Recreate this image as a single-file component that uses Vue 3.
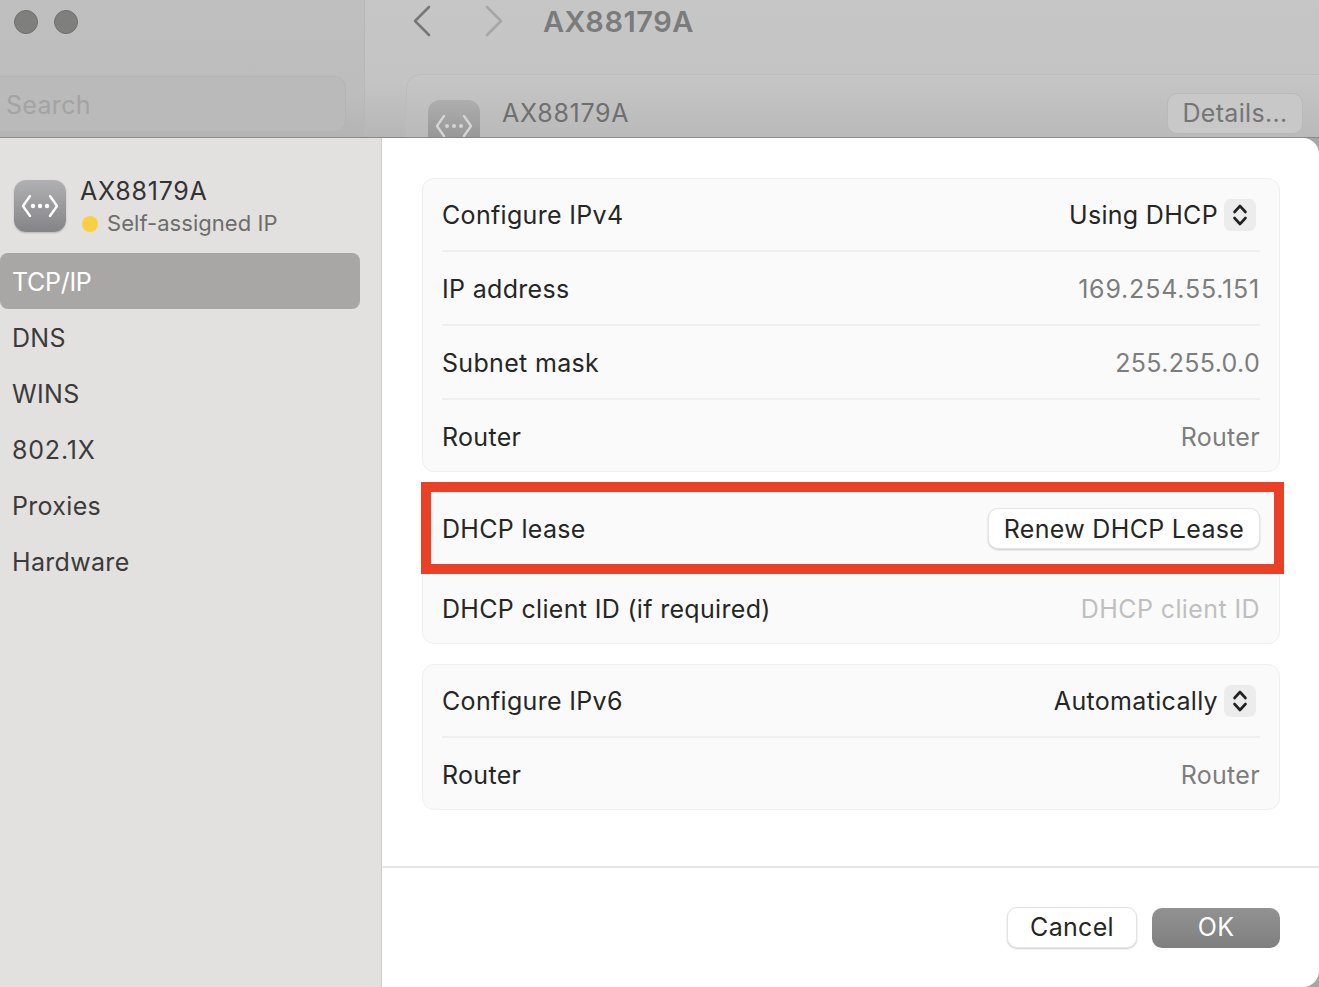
<script setup>
const tabs = ['TCP/IP', 'DNS', 'WINS', '802.1X', 'Proxies', 'Hardware']
</script>

<template>
  <div class="page">
    <header class="backdrop">
      <div class="back-side">
        <div class="lights"><span class="light"></span><span class="light"></span></div>
        <div class="search">Search</div>
      </div>
      <div class="back-main">
        <div class="nav">
          <svg class="chev" width="20" height="32" viewBox="0 0 20 32"><path d="M17 2 3 16l14 14" fill="none" stroke="#777" stroke-width="2.6" stroke-linecap="round" stroke-linejoin="round"/></svg>
          <svg class="chev second" width="20" height="32" viewBox="0 0 20 32"><path d="m3 2 14 14L3 30" fill="none" stroke="#a6a6a6" stroke-width="2.6" stroke-linecap="round" stroke-linejoin="round"/></svg>
          <span class="title">AX88179A</span>
        </div>
        <div class="back-card">
          <div class="icon dim">
            <svg width="38" height="22" viewBox="0 0 38 22"><path d="M9 1 2 11l7 10M29 1l7 10-7 10" fill="none" stroke="#d4d4d4" stroke-width="2.4" stroke-linecap="round" stroke-linejoin="round"/><circle cx="12" cy="11" r="2" fill="#d4d4d4"/><circle cx="19" cy="11" r="2" fill="#d4d4d4"/><circle cx="26" cy="11" r="2" fill="#d4d4d4"/></svg>
          </div>
          <span class="back-name">AX88179A</span>
          <span class="details">Details...</span>
        </div>
      </div>
    </header>

    <div class="sheet">
      <aside class="sidebar">
        <div class="device">
          <div class="icon">
            <svg width="38" height="22" viewBox="0 0 38 22"><path d="M9 1 2 11l7 10M29 1l7 10-7 10" fill="none" stroke="#fff" stroke-width="2.4" stroke-linecap="round" stroke-linejoin="round"/><circle cx="12" cy="11" r="2.2" fill="#fff"/><circle cx="19" cy="11" r="2.2" fill="#fff"/><circle cx="26" cy="11" r="2.2" fill="#fff"/></svg>
          </div>
          <div class="device-text">
            <div class="device-name">AX88179A</div>
            <div class="device-status"><span class="dot"></span>Self-assigned IP</div>
          </div>
        </div>
        <nav class="tabs">
          <div v-for="(t, i) in tabs" :key="t" class="tab" :class="{ active: i === 0 }">{{ t }}</div>
        </nav>
      </aside>

      <main class="content">
        <div class="forms">
          <section class="group first">
            <div class="row r1">
              <span>Configure IPv4</span>
              <span class="select">Using DHCP
                <span class="stepper"><svg width="16" height="26" viewBox="0 0 16 26"><path d="m2.500 10 5.500-6 5.500 6M2.500 16l5.500 6 5.500-6" fill="none" stroke="#222" stroke-width="2.600" stroke-linecap="round" stroke-linejoin="round"/></svg></span>
              </span>
            </div>
            <div class="row shifted"><span>IP address</span><span class="val ip">169.254.55.151</span></div>
            <div class="row shifted"><span>Subnet mask</span><span class="val">255.255.0.0</span></div>
            <div class="row last"><span>Router</span><span class="val">Router</span></div>
          </section>

          <section class="group second">
            <div class="row lease">
              <span>DHCP lease</span>
              <button class="btn renew">Renew DHCP Lease</button>
            </div>
            <div class="row client"><span>DHCP client ID (if required)</span><span class="val ph">DHCP client ID</span></div>
            <div class="mark"></div>
          </section>

          <section class="group third">
            <div class="row r1">
              <span>Configure IPv6</span>
              <span class="select auto">Automatically
                <span class="stepper"><svg width="16" height="26" viewBox="0 0 16 26"><path d="m2.500 10 5.500-6 5.500 6M2.500 16l5.500 6 5.500-6" fill="none" stroke="#222" stroke-width="2.600" stroke-linecap="round" stroke-linejoin="round"/></svg></span>
              </span>
            </div>
            <div class="row last"><span>Router</span><span class="val">Router</span></div>
          </section>
        </div>

        <footer class="foot">
          <button class="btn cancel"><span class="lift">Cancel</span></button>
          <button class="btn ok"><span class="lift">OK</span></button>
        </footer>
      </main>
    </div>
  </div>
</template>

<style>
html, body { margin: 0; background: #a9a9a9; }
</style>

<style scoped>
.page {
  width: 1319px;
  height: 987px;
  overflow: hidden;
  background: #a6a6a6;
  font-family: Inter, "Liberation Sans", sans-serif;
  font-size: 25px;
  letter-spacing: .32px;
  color: #262626;
  display: flex;
  flex-direction: column;
}
.backdrop {
  height: 137px;
  flex: none;
  display: flex;
  border-bottom: 1px solid #8a8a8a;
  background: linear-gradient(#c6c6c6, #c4c4c4 60%, #b6b6b6);
  overflow: hidden;
}
.back-side {
  width: 365px;
  flex: none;
  box-sizing: border-box;
  border-right: 1px solid #b7b7b7;
  background: linear-gradient(#bfbfbf, #bdbdbd 70%, #b4b4b4);
}
.lights {
  display: flex;
  gap: 16px;
  padding: 10px 0 0 14px;
}
.light {
  width: 24px;
  height: 24px;
  box-sizing: border-box;
  border-radius: 50%;
  background: #7f7f7d;
  border: 1px solid #6f6f6e;
}
.search {
  margin-top: 42px;
  width: 346px;
  height: 56px;
  box-sizing: border-box;
  padding: 13px 0 0 6px;
  border-radius: 0 12px 12px 0;
  background: #bababa;
  border: 1px solid #b4b4b4;
  border-left: 0;
  color: #a3a3a3;
  line-height: 30px;
}
.back-main {
  flex: 1;
  padding-left: 41px;
}
.nav {
  display: flex;
  align-items: center;
  height: 42px;
}
.chev { margin-left: 6px; }
.chev.second { margin-left: 52px; }
.title {
  margin-left: 39px;
  font-size: 29px;
  letter-spacing: .5px;
  font-weight: 600;
  color: #7b7b7b;
}
.back-card {
  margin-top: 32px;
  height: 90px;
  box-sizing: border-box;
  margin-right: -20px;
  border: 1px solid #bcbcbc;
  border-radius: 14px;
  background: linear-gradient(#c6c6c6, #bdbdbd 50%, #b5b5b5);
  padding: 25px 35px 0 21px;
  display: flex;
  align-items: flex-start;
}
.icon {
  width: 52px;
  height: 52px;
  flex: none;
  border-radius: 12px;
  background: linear-gradient(#b1b0b3, #848387);
  display: flex;
  align-items: center;
  justify-content: center;
  box-shadow: 0 1px 2px rgba(0, 0, 0, .2);
}
.icon.dim { background: linear-gradient(#aeaeae, #8f8f8f); box-shadow: none; }
.back-name {
  margin-left: 22px;
  margin-top: -1px;
  letter-spacing: .7px;
  color: #6f6f6f;
  line-height: 28px;
}
.details {
  flex: none;
  margin-left: auto;
  margin-top: -7px;
  width: 136px;
  height: 41px;
  box-sizing: border-box;
  text-align: center;
  line-height: 38px;
  border-radius: 10px;
  color: #757575;
  background: #c8c8c8;
  border: 1px solid #b9b9b9;
}
.sheet {
  flex: 1;
  min-height: 0;
  display: flex;
}
.sidebar {
  width: 382px;
  flex: none;
  box-sizing: border-box;
  background: #e2e1df;
  border-right: 1px solid #cfcecd;
  padding-top: 42px;
}
.device {
  display: flex;
  padding-left: 14px;
  gap: 14px;
  height: 73px;
}
.device-text { margin-top: -2px; }
.device-name {
  line-height: 26px;
  letter-spacing: .75px;
  color: #333;
}
.device-status {
  display: flex;
  align-items: center;
  margin-top: 6px;
  line-height: 26px;
  font-size: 22px;
  letter-spacing: .05px;
  color: #6d6d6c;
}
.dot {
  width: 16px;
  height: 16px;
  margin: 2px 9px 0 2px;
  border-radius: 50%;
  background: #fbcf43;
}
.tab {
  height: 56px;
  line-height: 58px;
  padding-left: 12px;
  margin: 0 21px 0 0;
  color: #3b3b3b;
  border-radius: 8px;
}
.tab:nth-child(4) { letter-spacing: .8px; }
.tab.active {
  background: #a8a7a5;
  color: #fff;
  letter-spacing: -.3px;
}
.content {
  flex: 1;
  min-width: 0;
  background: #fff;
  border-radius: 0 16px 16px 0;
  display: flex;
  flex-direction: column;
}
.forms {
  padding: 40px 39px 0 40px;
  display: flex;
  flex-direction: column;
  gap: 20px;
  height: 730px;
  box-sizing: border-box;
  border-bottom: 2px solid #e6e6e6;
}
.group {
  position: relative;
  border: 1px solid #efefef;
  border-radius: 12px;
  background: #fafafa;
  padding: 0 19px;
}
.row {
  display: flex;
  align-items: center;
  justify-content: space-between;
  height: 74px;
  box-sizing: border-box;
  border-bottom: 2px solid #efefef;
}
.row.r1 { height: 73px; }
.row.shifted { padding-top: 2px; }
.row.last { border-bottom: 0; height: 71px; padding-top: 3px; }
.row.lease { height: 73px; border-bottom: 0; padding-bottom: 2px; }
.row.client { height: 77px; padding-top: 9px; border-bottom: 0; }
.group.third .row.last { padding-top: 2px; }
.mark {
  position: absolute;
  left: -2px;
  right: -5px;
  top: -11px;
  height: 92px;
  box-sizing: border-box;
  border: 10px solid #ea4126;
  pointer-events: none;
}
.val { color: #7d7d7d; }
.val.ip { letter-spacing: .8px; }
.val.ph { color: #bfbfbf; letter-spacing: .4px; }
.select {
  display: flex;
  align-items: center;
  gap: 6px;
  padding-right: 4px;
}
.stepper {
  width: 32px;
  height: 32px;
  margin-top: 1px;
  border-radius: 7px;
  background: #ececec;
  display: flex;
  align-items: center;
  justify-content: center;
}
.btn {
  font: inherit;
  letter-spacing: inherit;
  color: #262626;
  border-radius: 10px;
  background: #fff;
  border: 1px solid #e4e4e4;
  box-shadow: 0 1px 2px rgba(0, 0, 0, .2);
  padding: 0;
  height: 41px;
  box-sizing: border-box;
}
.renew { width: 272px; }
.foot {
  display: flex;
  justify-content: flex-end;
  gap: 15px;
  padding: 39px 39px 0 0;
}
.lift { display: block; margin-top: -2px; }
.cancel { width: 130px; }
.ok {
  width: 128px;
  height: 40px;
  margin-top: 1px;
  color: #fff;
  border: 0;
  box-shadow: none;
  background: linear-gradient(#929292, #7f7f7f);
}
</style>
